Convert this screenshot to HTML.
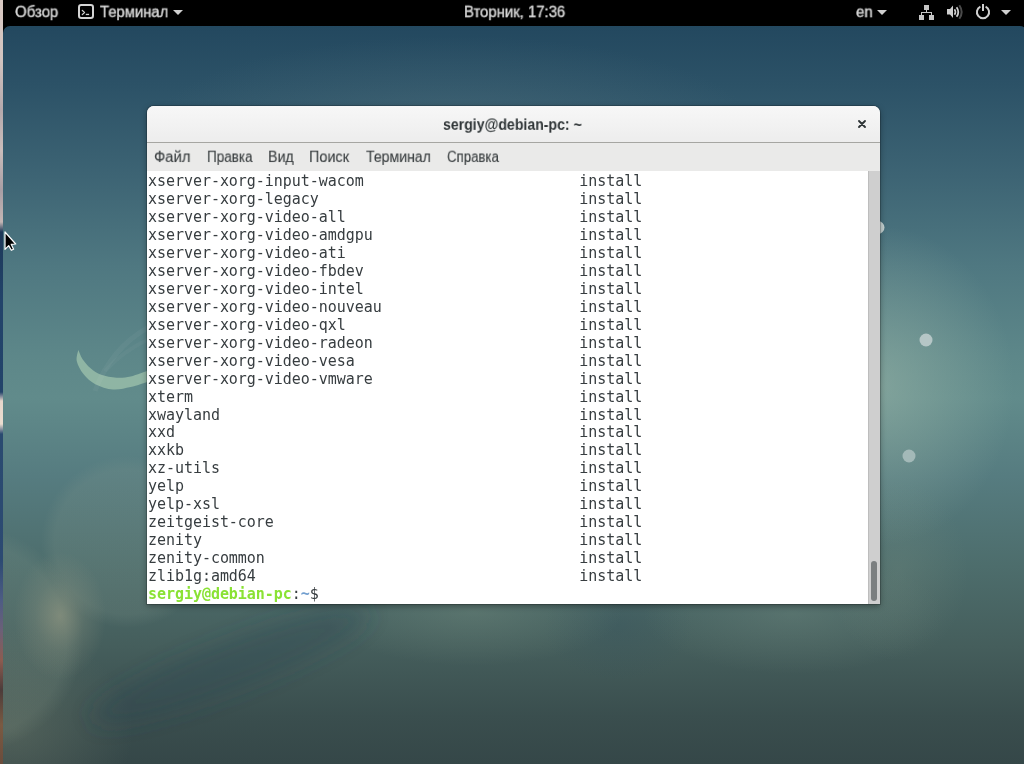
<!DOCTYPE html>
<html lang="ru"><head><meta charset="utf-8"><title>Терминал</title>
<style>
html,body{margin:0;padding:0;}
body{width:1024px;height:764px;overflow:hidden;position:relative;background:#000;font-family:"Liberation Sans","DejaVu Sans",sans-serif;}
#strip{position:absolute;left:0;top:0;width:3px;height:764px;
 background:linear-gradient(to bottom,#d9c9c3 0,#d2c4c0 60px,#b5a9ac 110px,#cbbdbb 150px,#a89ea4 190px,#c4b6b4 222px,#1d3858 232px,#22436a 300px,#23446a 392px,#e6d6cb 401px,#eadccf 424px,#2a4a70 434px,#2c4a72 560px,#4d5c84 600px,#6b6078 630px,#8c5c50 660px,#4c3c3a 690px,#7a5a42 725px,#6a4c3c 764px);}
#wall{position:absolute;left:3px;top:26px;width:1024px;height:738px;border-radius:7px 7px 0 0;overflow:hidden;
 background:
  radial-gradient(ellipse 46px 64px at 57px 590px,rgba(168,166,138,.5),rgba(155,158,135,.2) 55%,rgba(150,155,130,0) 100%),
  radial-gradient(ellipse 120px 100px at 10px 705px,rgba(130,140,118,.32),rgba(130,140,118,0) 100%),
  radial-gradient(circle 113px at -33px 614px,rgba(140,160,145,.17) 0,rgba(140,160,145,.17) 85%,rgba(140,160,145,0) 100%),
  radial-gradient(circle 86px at 124px 516px,rgba(140,158,145,.17) 0,rgba(140,158,145,.17) 84%,rgba(140,158,145,0) 100%),
  radial-gradient(ellipse 135px 160px at 876px 360px,rgba(155,182,168,.55),rgba(150,180,165,0) 100%),
  radial-gradient(ellipse 300px 90px at 450px 100px,rgba(90,120,130,.35),rgba(90,120,130,0) 100%),
  radial-gradient(ellipse 150px 55px at 470px 585px,rgba(118,142,128,.38),rgba(118,142,128,0) 100%),
  radial-gradient(ellipse 70px 90px at 895px 545px,rgba(128,148,132,.24),rgba(128,148,132,0) 100%),
  radial-gradient(ellipse 150px 60px at 790px 588px,rgba(115,140,130,.36),rgba(115,140,130,0) 100%),
  radial-gradient(ellipse 75px 55px at 615px 600px,rgba(48,78,92,.28),rgba(48,78,92,0) 100%),
  linear-gradient(to bottom,#23485f 0,#2c5267 60px,#3d6474 150px,#4f7881 240px,#5d8789 330px,#618b8b 372px,#567c80 450px,#4d6d6c 540px,#455e5c 620px,#3a4e4e 690px,#354748 738px);}
#top{position:absolute;left:3px;top:0;width:1021px;height:26px;background:#000;color:#d6d6d6;font-size:15.6px;}
#top span{-webkit-text-stroke:0.4px #d6d6d6;position:absolute;top:0px;line-height:26px;white-space:pre;display:inline-block;transform-origin:0 0;will-change:transform;}
.tri{position:absolute;width:0;height:0;border-left:5px solid transparent;border-right:5px solid transparent;border-top:5px solid #d0d0d0;}
#win{position:absolute;left:147px;top:106px;width:733px;height:498px;border-radius:7px 7px 0 0;background:#fff;overflow:hidden;box-shadow:0 0 0 1px rgba(0,0,0,.18),0 2px 6px rgba(0,0,0,.35);}
#tb{position:absolute;left:0;top:0;width:733px;height:36px;background:linear-gradient(to bottom,#f7f7f7,#f3f3f3 40%,#ededed);border-bottom:1px solid #a6a6a2;}
#title{position:absolute;left:0;width:733px;top:0;height:36px;font-weight:bold;font-size:15.8px;color:#2e3436;}
#title span{position:absolute;top:1px;line-height:38px;white-space:pre;display:inline-block;transform-origin:0 0;will-change:transform;}
#mb{position:absolute;left:0;top:37px;width:733px;height:28px;background:#eaeae9;color:#3a3f41;font-size:15.6px;}
#mb span{-webkit-text-stroke:0.12px #3a3f41;position:absolute;top:1px;line-height:27px;white-space:pre;display:inline-block;transform-origin:0 0;will-change:transform;}
.term{position:absolute;left:1px;margin:0;will-change:transform;font-family:"DejaVu Sans Mono","Liberation Mono",monospace;font-size:15px;letter-spacing:-0.045px;line-height:18px;color:#373d40;white-space:pre;}
.term b.g{color:#8ae234;}
.term b.b{color:#729fcf;}
#sb{position:absolute;left:721px;top:65px;width:12px;height:433px;background:#cfcfcf;border-left:1px solid #bdbdbd;box-sizing:border-box;}
#thumb{position:absolute;left:2px;top:390px;width:6px;height:40px;border-radius:3px;background:#7b7f80;}
.dot{position:absolute;border-radius:50%;}
</style></head><body>
<div id="strip"></div>
<div id="wall">
 <svg width="1024" height="738" style="position:absolute;left:0;top:0">
  <defs><filter id="bl" x="-50%" y="-100%" width="200%" height="300%"><feGaussianBlur stdDeviation="11"/></filter></defs>
  <ellipse cx="227" cy="640" rx="150" ry="24" transform="rotate(-21 227 640)" fill="rgba(38,66,82,.34)" filter="url(#bl)"/>
  <path d="M75.3 324.0 C75.0 325.9 72.9 331.2 73.8 335.2 C74.7 339.2 77.5 344.4 80.6 348.2 C83.7 352.0 87.4 355.6 92.3 358.2 C97.2 360.8 104.1 363.0 110.0 363.5 C115.9 364.0 121.7 362.4 127.7 361.1 C133.7 359.8 142.9 356.5 146.0 355.6 L146 344.3  C142.9 345.3 133.1 349.3 127.7 350.5 C122.3 351.7 118.4 352.0 113.5 351.7 C108.6 351.4 102.5 350.4 98.2 348.8 C93.9 347.2 90.7 345.0 87.6 342.3 C84.5 339.6 81.5 335.9 79.4 332.9 C77.4 329.8 76.0 325.5 75.3 324.0 Z" fill="#8fb5a4"/>
  <path d="M92 365 Q108 322 146 301" fill="none" stroke="rgba(255,255,255,.04)" stroke-width="5"/><path d="M102 345 Q120 325 146 313" fill="none" stroke="rgba(255,255,255,.03)" stroke-width="4"/>
  <circle cx="923" cy="314" r="6.5" fill="#b5c6c6"/>
  <circle cx="906" cy="430" r="6.5" fill="#a3b9b8"/>
  <circle cx="875" cy="201.5" r="6.5" fill="#c3d0d0"/>
 </svg>
</div>
<div id="top">
 <span id="t1" style="left:12.25px;transform:scale(0.9613,0.95)">Обзор</span>
 <svg style="position:absolute;left:75px;top:4px" width="16" height="15" viewBox="0 0 16 15"><rect x="1" y="1" width="14" height="13" rx="2.2" fill="none" stroke="#d4d4d4" stroke-width="2"/><path d="M4.3 6.4 L6.5 8.5 L4.3 10.6" fill="none" stroke="#d0d0d0" stroke-width="1.3" stroke-linecap="round" stroke-linejoin="round"/><rect x="7.8" y="9.8" width="3.3" height="1.3" fill="#d0d0d0"/></svg>
 <span id="t2" style="left:96.70px;transform:scale(0.9506,0.95)">Терминал</span>
 <i class="tri" style="left:170px;top:10px"></i>
 <span id="t3" style="left:461.30px;transform:scale(0.9549,0.95)">Вторник, 17:36</span>
 <span id="t4" style="left:853.12px;transform:scale(0.9550,0.95)">en</span>
 <i class="tri" style="left:874px;top:10px"></i>
 <svg style="position:absolute;left:916px;top:5px" width="16" height="15" viewBox="0 0 16 15" fill="#c6c6c6"><rect x="5" y="0" width="5" height="5"/><rect x="7" y="5" width="1" height="3"/><rect x="2" y="7" width="11" height="1"/><rect x="2" y="7" width="1" height="3"/><rect x="12" y="7" width="1" height="3"/><rect x="0" y="10" width="5" height="5"/><rect x="10" y="10" width="5" height="5"/></svg>
 <svg style="position:absolute;left:943px;top:4px" width="18" height="16" viewBox="0 0 18 16"><path d="M1 5 H4 L7 1.5 V14 L4 10.5 H1 Z" fill="#cfcfcf"/><path d="M8.5 5.2 Q10.5 8 8.5 10.8" fill="none" stroke="#cfcfcf" stroke-width="1.6"/><path d="M10.6 3.2 Q14 8 10.6 12.8" fill="none" stroke="#cfcfcf" stroke-width="1.8"/><path d="M13.3 1.2 Q18 8 13.3 14.8" fill="none" stroke="#4a4a4a" stroke-width="2"/></svg>
 <svg style="position:absolute;left:972px;top:3px" width="16" height="17" viewBox="0 0 16 17"><path d="M5.4 3.6 A6.1 6.1 0 1 0 10.6 3.6" fill="none" stroke="#d0d0d0" stroke-width="2"/><rect x="7" y="1" width="2" height="7" fill="#d0d0d0"/></svg>
 <i class="tri" style="left:998px;top:10px"></i>
</div>
<div id="win">
 <div id="tb"><div id="title"><span id="tt" style="left:296.40px;transform:scale(0.8932,0.95)">sergiy@debian-pc: ~</span></div>
  <svg style="position:absolute;left:710px;top:13px" width="10" height="10" viewBox="0 0 10 10"><path d="M2 2 L8 8 M8 2 L2 8" stroke="#2e3436" stroke-width="1.9" stroke-linecap="round"/></svg>
 </div>
 <div id="mb"><span id="m1" style="left:7.38px;transform:scale(0.9519,0.95)">Файл</span><span id="m2" style="left:59.95px;transform:scale(0.8656,0.95)">Правка</span><span id="m3" style="left:121.03px;transform:scale(0.9149,0.95)">Вид</span><span id="m4" style="left:162.47px;transform:scale(0.9239,0.95)">Поиск</span><span id="m5" style="left:219.34px;transform:scale(0.9032,0.95)">Терминал</span><span id="m6" style="left:299.90px;transform:scale(0.8483,0.95)">Справка</span></div>
 <pre class="term" style="top:66px">xserver-xorg-input-wacom                        install
xserver-xorg-legacy                             install
xserver-xorg-video-all                          install
xserver-xorg-video-amdgpu                       install
xserver-xorg-video-ati                          install
xserver-xorg-video-fbdev                        install
xserver-xorg-video-intel                        install
xserver-xorg-video-nouveau                      install
xserver-xorg-video-qxl                          install
xserver-xorg-video-radeon                       install
xserver-xorg-video-vesa                         install
xserver-xorg-video-vmware                       install
xterm                                           install
xwayland                                        install</pre>
 <pre class="term" style="top:317px">xxd                                             install
xxkb                                            install
xz-utils                                        install
yelp                                            install
yelp-xsl                                        install
zeitgeist-core                                  install
zenity                                          install
zenity-common                                   install
zlib1g:amd64                                    install
<b class="g">sergiy@debian-pc</b>:<b class="b">~</b>$</pre>
 <div id="sb"><div id="thumb"></div></div>
</div>
<svg style="position:absolute;left:3.6px;top:230.6px" width="14" height="22" viewBox="0 0 14 22"><path d="M1 1 L1 18.4 L4.7 14.6 L7.3 19.3 L9.6 18.2 L7.2 13.3 L11.7 13 Z" fill="#000" stroke="#fff" stroke-width="1.2" stroke-linejoin="round"/></svg>
</body></html>
